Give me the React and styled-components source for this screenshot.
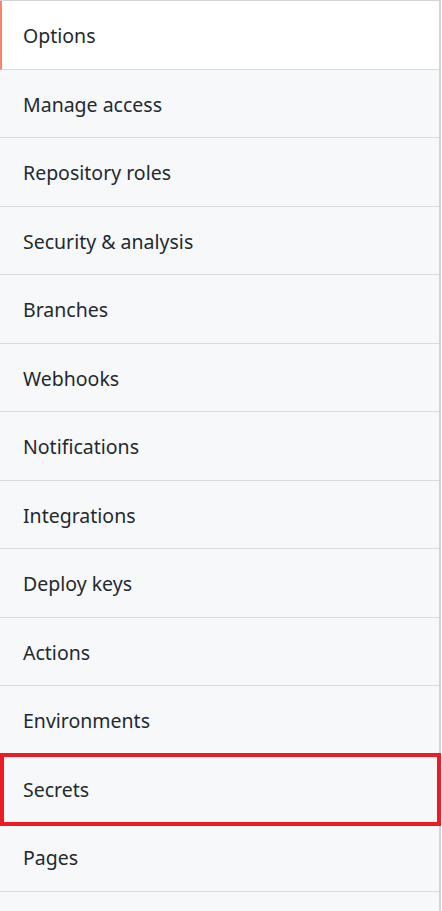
import React from 'react';
import styled, { createGlobalStyle } from 'styled-components';

const GlobalStyle = createGlobalStyle`
  html, body {
    margin: 0;
    padding: 0;
    background: #ffffff;
  }
  body {
    font-family: "Noto Sans", "Open Sans", sans-serif;
  }
`;

const Menu = styled.nav`
  box-sizing: border-box;
  width: 441px;
  min-height: 911px;
  background-color: #f6f8fa;
  border-top: 1px solid #d1d5da;
  border-right: 2px solid #d1d5da;
  display: flex;
  flex-direction: column;
`;

const Item = styled.a`
  position: relative;
  box-sizing: border-box;
  height: 68.5px;
  flex: none;
  display: flex;
  align-items: center;
  padding-left: ${(p) => (p.selected ? '21px' : '23px')};
  padding-top: 2px;
  border-bottom: 1px solid #d8dce0;
  border-left: ${(p) => (p.selected ? '2px solid #f9826c' : 'none')};
  background-color: ${(p) => (p.selected ? '#ffffff' : 'transparent')};
  color: #24292e;
  font-size: 19.5px;
  text-decoration: none;

  ${(p) =>
    p.highlighted &&
    `
    &::after {
      content: '';
      position: absolute;
      top: -2px;
      bottom: -4px;
      left: 0;
      right: -2px;
      border: 4px solid #ed1c24;
      pointer-events: none;
    }
  `}
`;

const items = [
  'Options',
  'Manage access',
  'Repository roles',
  'Security & analysis',
  'Branches',
  'Webhooks',
  'Notifications',
  'Integrations',
  'Deploy keys',
  'Actions',
  'Environments',
  'Secrets',
  'Pages',
];

export default function App() {
  return (
    <>
      <GlobalStyle />
      <Menu>
        {items.map((label) => (
          <Item
            key={label}
            href="#"
            selected={label === 'Options'}
            highlighted={label === 'Secrets'}
          >
            {label}
          </Item>
        ))}
      </Menu>
    </>
  );
}
